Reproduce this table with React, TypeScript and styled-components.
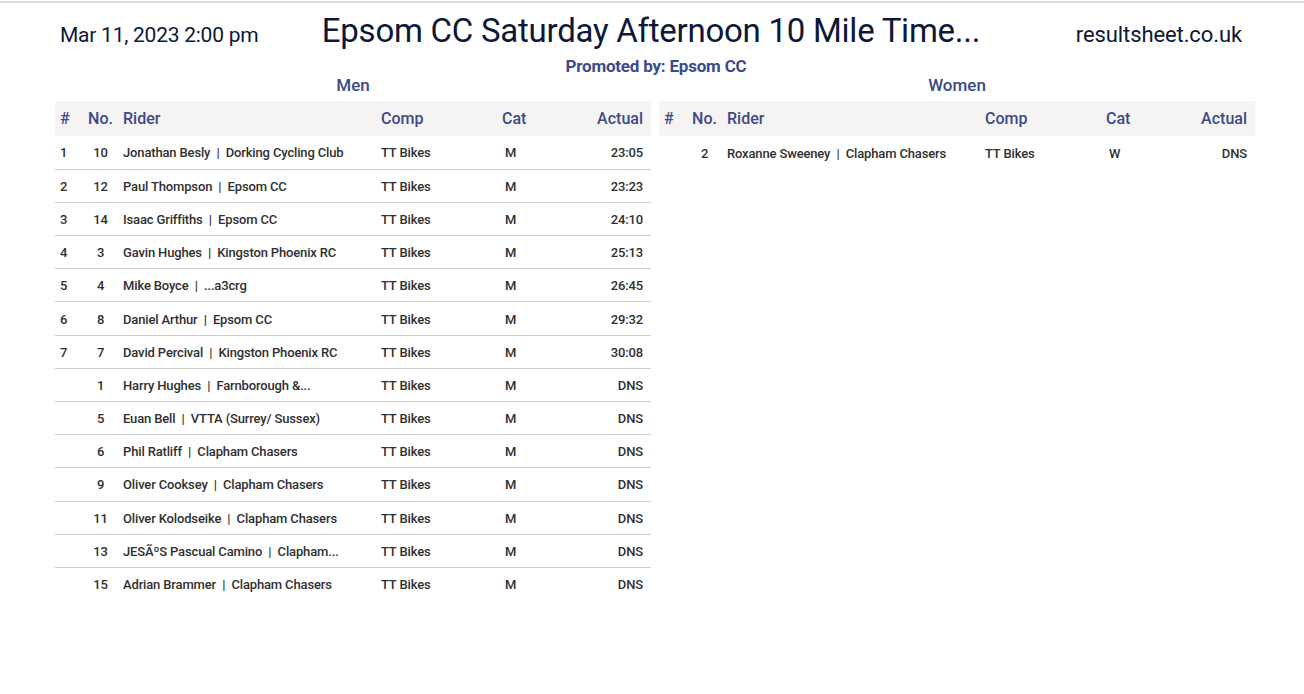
import React from "react";
import styled, { createGlobalStyle } from "styled-components";

const GlobalStyle = createGlobalStyle`
  html, body { margin: 0; padding: 0; background: #ffffff; }
  body { font-family: Roboto, "Noto Sans", Arial, sans-serif; color: #0d1838; }
`;

const Page = styled.div`
  width: 1304px;
  border-top: 2px solid #dcdcdc;
  margin-top: 1px;
`;

const TopBar = styled.header`
  display: flex;
  align-items: baseline;
  justify-content: space-between;
  width: 1200px;
  margin-left: 55px;
  padding: 8px 0 0;
  height: 44px;
  box-sizing: border-box;
`;

const DateText = styled.div`
  font-size: 21px;
  font-weight: 400;
  padding-left: 5px;
  width: 264px;
  box-sizing: border-box;
  color: #0d1838;
  letter-spacing: -0.25px;
`;

const Title = styled.h1`
  margin: 0;
  font-size: 33px;
  font-weight: 400;
  color: #0d1838;
  white-space: nowrap;
  letter-spacing: -0.25px;
`;

const Site = styled.div`
  font-size: 22px;
  width: 272px;
  text-align: right;
  padding-right: 13px;
  box-sizing: border-box;
  color: #0d1838;
  letter-spacing: -0.1px;
`;

const Promoted = styled.div`
  text-align: center;
  font-size: 17px;
  font-weight: 700;
  color: #3c4a87;
  margin-top: 9px;
  padding-left: 8px;
  letter-spacing: -0.2px;
`;

const Columns = styled.div`
  display: grid;
  grid-template-columns: 596px 596px;
  column-gap: 8px;
  margin-left: 55px;
`;

const Section = styled.section``;

const SectionTitle = styled.h2`
  margin: 0;
  text-align: center;
  font-size: 17px;
  font-weight: 500;
  color: #3c4a87;
  line-height: 18px;
  padding: 0 0 7px;
`;

const Table = styled.table`
  width: 596px;
  border-collapse: collapse;
  table-layout: fixed;
`;

const HeadRow = styled.tr`
  background: #f6f3f3;
  height: 35px;
`;

type Align = "left" | "center" | "right";

const Th = styled.th<{ $align?: Align }>`
  font-size: 16px;
  font-weight: 500;
  color: #3c4a87;
  text-align: ${(p) => p.$align || "left"};
  padding: 0 5px;
  &:last-child { padding-right: 8px; }
`;

const Row = styled.tr`
  height: 33.2px;
  border-bottom: 1px solid #cfcfcf;
  &:last-child { border-bottom: none; }
`;

const Td = styled.td<{ $align?: Align; $pre?: boolean }>`
  font-size: 13px;
  font-weight: 500;
  color: #303030;
  text-align: ${(p) => p.$align || "left"};
  padding: 1px 5px 0;
  white-space: ${(p) => (p.$pre ? "pre" : "nowrap")};
  overflow: hidden;
  letter-spacing: -0.15px;
  &:last-child { padding-right: 8px; }
`;

type Result = { pos: string; no: string; rider: string; comp: string; cat: string; actual: string };

const men: Result[] = [
  { pos: "1", no: "10", rider: "Jonathan Besly  |  Dorking Cycling Club", comp: "TT Bikes", cat: "M", actual: "23:05" },
  { pos: "2", no: "12", rider: "Paul Thompson  |  Epsom CC", comp: "TT Bikes", cat: "M", actual: "23:23" },
  { pos: "3", no: "14", rider: "Isaac Griffiths  |  Epsom CC", comp: "TT Bikes", cat: "M", actual: "24:10" },
  { pos: "4", no: "3", rider: "Gavin Hughes  |  Kingston Phoenix RC", comp: "TT Bikes", cat: "M", actual: "25:13" },
  { pos: "5", no: "4", rider: "Mike Boyce  |  ...a3crg", comp: "TT Bikes", cat: "M", actual: "26:45" },
  { pos: "6", no: "8", rider: "Daniel Arthur  |  Epsom CC", comp: "TT Bikes", cat: "M", actual: "29:32" },
  { pos: "7", no: "7", rider: "David Percival  |  Kingston Phoenix RC", comp: "TT Bikes", cat: "M", actual: "30:08" },
  { pos: "", no: "1", rider: "Harry Hughes  |  Farnborough &...", comp: "TT Bikes", cat: "M", actual: "DNS" },
  { pos: "", no: "5", rider: "Euan Bell  |  VTTA (Surrey/ Sussex)", comp: "TT Bikes", cat: "M", actual: "DNS" },
  { pos: "", no: "6", rider: "Phil Ratliff  |  Clapham Chasers", comp: "TT Bikes", cat: "M", actual: "DNS" },
  { pos: "", no: "9", rider: "Oliver Cooksey  |  Clapham Chasers", comp: "TT Bikes", cat: "M", actual: "DNS" },
  { pos: "", no: "11", rider: "Oliver Kolodseike  |  Clapham Chasers", comp: "TT Bikes", cat: "M", actual: "DNS" },
  { pos: "", no: "13", rider: "JESÃºS Pascual Camino  |  Clapham...", comp: "TT Bikes", cat: "M", actual: "DNS" },
  { pos: "", no: "15", rider: "Adrian Brammer  |  Clapham Chasers", comp: "TT Bikes", cat: "M", actual: "DNS" },
];

const women: Result[] = [
  { pos: "", no: "2", rider: "Roxanne Sweeney  |  Clapham Chasers", comp: "TT Bikes", cat: "W", actual: "DNS" },
];

const ResultsTable: React.FC<{ rows: Result[] }> = ({ rows }) => (
  <Table>
    <colgroup>
      <col style={{ width: 28 }} />
      <col style={{ width: 35 }} />
      <col style={{ width: 258 }} />
      <col style={{ width: 121 }} />
      <col style={{ width: 63 }} />
      <col />
    </colgroup>
    <thead>
      <HeadRow>
        <Th>#</Th>
        <Th $align="center">No.</Th>
        <Th>Rider</Th>
        <Th>Comp</Th>
        <Th>Cat</Th>
        <Th $align="right">Actual</Th>
      </HeadRow>
    </thead>
    <tbody>
      {rows.map((r, i) => (
        <Row key={i}>
          <Td>{r.pos}</Td>
          <Td $align="center">{r.no}</Td>
          <Td $pre>{r.rider}</Td>
          <Td>{r.comp}</Td>
          <Td>&nbsp;{r.cat}</Td>
          <Td $align="right">{r.actual}</Td>
        </Row>
      ))}
    </tbody>
  </Table>
);

export default function App() {
  return (
    <Page>
      <GlobalStyle />
      <TopBar>
        <DateText>Mar 11, 2023 2:00 pm</DateText>
        <Title>Epsom CC Saturday Afternoon 10 Mile Time...</Title>
        <Site>resultsheet.co.uk</Site>
      </TopBar>
      <Promoted>Promoted by: Epsom CC</Promoted>
      <Columns>
        <Section>
          <SectionTitle>Men</SectionTitle>
          <ResultsTable rows={men} />
        </Section>
        <Section>
          <SectionTitle>Women</SectionTitle>
          <ResultsTable rows={women} />
        </Section>
      </Columns>
    </Page>
  );
}
